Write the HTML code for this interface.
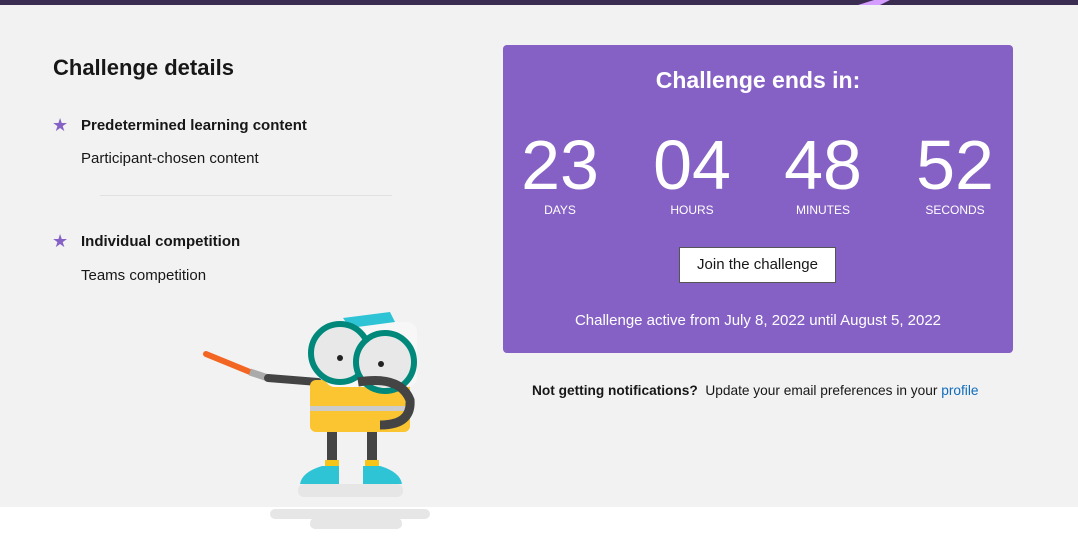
<!DOCTYPE html>
<html><head><style>
*{margin:0;padding:0;box-sizing:border-box}
body{width:1078px;height:537px;background:#fff;font-family:"Segoe UI","Liberation Sans",sans-serif;color:#171717;position:relative;overflow:hidden}
.bg{position:absolute;left:0;top:0;width:1078px;height:507px;background:#f2f2f2}
.top{position:absolute;left:0;top:0;width:1078px;height:5px;background:#3b2d52}
.abs{position:absolute}
h2{position:absolute;left:53px;top:55px;font-size:22px;font-weight:600}
.item{position:absolute;left:81px;font-size:15px}
.b{font-weight:600}
.star{position:absolute;left:52px;color:#8661c5;font-size:18px}
.card{position:absolute;left:503px;top:45px;width:510px;height:308px;background:#8661c5;border-radius:4px;color:#fff;text-align:center}
.num{position:absolute;top:82px;font-size:70px;font-weight:300;width:120px;text-align:center;line-height:76px}
.lab{position:absolute;top:158px;font-size:12px;width:120px;text-align:center}
.btn{position:absolute;left:176px;top:202px;width:157px;height:36px;background:#fff;color:#171717;border:1px solid #555;font-size:15px;line-height:34px}
</style></head><body>
<div class="bg"></div><div class="top"></div>
<svg class="abs" style="left:850px;top:0" width="228" height="6"><polygon points="8,5 24,0 40,0 30,5" fill="#d59dff"/></svg>
<h2>Challenge details</h2>
<div class="star" style="top:115px">★</div>
<div class="item b" style="top:117px">Predetermined learning content</div>
<div class="item" style="top:150px">Participant-chosen content</div>
<div class="abs" style="left:100px;top:195px;width:292px;height:1px;background:#e1e1e1"></div>
<div class="star" style="top:231px">★</div>
<div class="item b" style="top:233px">Individual competition</div>
<div class="item" style="top:267px">Teams competition</div>
<div class="card">
<div style="position:absolute;top:22px;width:100%;font-size:23px;font-weight:600">Challenge ends in:</div>
<div class="num" style="left:-3px">23</div><div class="lab" style="left:-3px">DAYS</div>
<div class="num" style="left:129px">04</div><div class="lab" style="left:129px">HOURS</div>
<div class="num" style="left:260px">48</div><div class="lab" style="left:260px">MINUTES</div>
<div class="num" style="left:392px">52</div><div class="lab" style="left:392px">SECONDS</div>
<div class="btn">Join the challenge</div>
<div style="position:absolute;top:267px;width:100%;font-size:15px">Challenge active from July 8, 2022 until August 5, 2022</div>
</div>
<div class="abs" style="left:532px;top:383px;font-size:13.7px"><b style="font-weight:600">Not getting notifications?</b>&nbsp; Update your email preferences in your <span style="color:#0f6cbd">profile</span></div>
<svg class="abs" style="left:0;top:0" width="1078" height="537">
<rect x="298" y="484" width="105" height="13" rx="6" fill="#e6e6e6"/>
<rect x="270" y="509" width="160" height="10" rx="5" fill="#e6e6e6"/>
<rect x="310" y="518" width="92" height="11" rx="5" fill="#e6e6e6"/>
<line x1="206" y1="354" x2="250" y2="372" stroke="#f26522" stroke-width="6" stroke-linecap="round"/>
<line x1="250" y1="372" x2="268" y2="378" stroke="#aaa" stroke-width="7"/>
<path d="M268 378 L318 382" stroke="#444" stroke-width="8" fill="none" stroke-linecap="round"/>
<rect x="327" y="425" width="10" height="45" fill="#444"/><rect x="367" y="425" width="10" height="45" fill="#444"/>
<rect x="325" y="460" width="14" height="6" fill="#f5c518"/><rect x="365" y="460" width="14" height="6" fill="#f5c518"/>
<path d="M300 484 Q302 472 322 466 L339 466 L339 484Z" fill="#2ec4d6"/>
<path d="M402 484 Q400 472 380 466 L363 466 L363 484Z" fill="#2ec4d6"/>
<rect x="310" y="380" width="100" height="52" rx="6" fill="#fbc531"/>
<rect x="310" y="406" width="100" height="5" fill="#ccc"/>
<rect x="325" y="322" width="92" height="65" rx="10" fill="#f7f7f7"/>
<path d="M343 318 L390 312 L395 322 L350 328Z" fill="#2ec4d6"/>
<circle cx="340" cy="353" r="29" fill="#e8e8e8" stroke="#00897b" stroke-width="6"/>
<circle cx="385" cy="362" r="29" fill="#e8e8e8" stroke="#00897b" stroke-width="6"/>
<circle cx="340" cy="358" r="3" fill="#222"/><circle cx="381" cy="364" r="3" fill="#222"/>
<path d="M358 382 Q400 375 410 400 Q412 425 380 425" stroke="#444" stroke-width="9" fill="none"/>
</svg>
</body></html>
